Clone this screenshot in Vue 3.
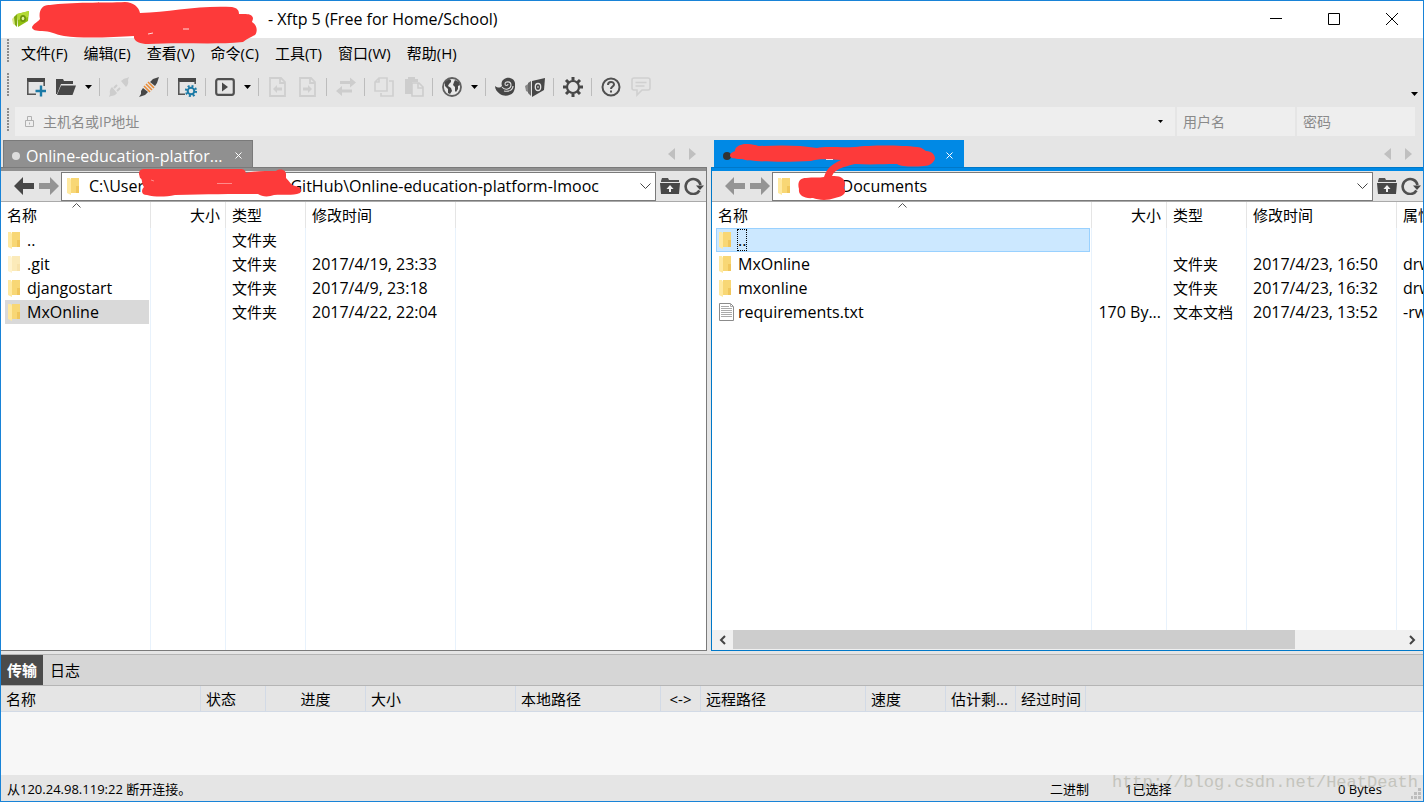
<script setup>
import { ref } from 'vue'

const menus = ['文件(F)', '编辑(E)', '查看(V)', '命令(C)', '工具(T)', '窗口(W)', '帮助(H)']

const tools = [
  { id: 'new', label: '新建' },
  { id: 'open', label: '打开', menu: true },
  { sep: true },
  { id: 'unplug', label: '断开', off: true },
  { id: 'plug', label: '重新连接' },
  { sep: true },
  { id: 'props', label: '属性' },
  { sep: true },
  { id: 'play', label: '运行', menu: true },
  { sep: true },
  { id: 'docleft', label: '下载', off: true },
  { id: 'docright', label: '上传', off: true },
  { sep: true },
  { id: 'swap', label: '同步', off: true },
  { sep: true },
  { id: 'copy', label: '复制', off: true },
  { id: 'paste', label: '粘贴', off: true },
  { sep: true },
  { id: 'globe', label: '编码', menu: true },
  { sep: true },
  { id: 'shell', label: 'Xshell' },
  { id: 'xftp', label: 'Xftp' },
  { sep: true },
  { id: 'gear', label: '选项' },
  { sep: true },
  { id: 'help', label: '帮助' },
  { id: 'chat', label: '反馈', off: true },
]

const gap = (n) => '\u00a0'.repeat(n)

const panes = ref([
  {
    side: 'local',
    tab: 'Online-education-platfor...',
    path: 'C:\\Users\\' + gap(32) + 'GitHub\\Online-education-platform-Imooc',
    cols: ['名称', '大小', '类型', '修改时间', ''],
    rows: [
      { name: '..', icon: 'folder', type: '文件夹' },
      { name: '.git', icon: 'folder', faded: true, type: '文件夹', time: '2017/4/19, 23:33' },
      { name: 'djangostart', icon: 'folder', type: '文件夹', time: '2017/4/9, 23:18' },
      { name: 'MxOnline', icon: 'folder', type: '文件夹', time: '2017/4/22, 22:04', selected: true },
    ],
  },
  {
    side: 'remote',
    tab: '',
    path: gap(10) + 'Documents',
    cols: ['名称', '大小', '类型', '修改时间', '属性'],
    rows: [
      { name: '..', icon: 'folder', selected: true },
      { name: 'MxOnline', icon: 'folder', type: '文件夹', time: '2017/4/23, 16:50', attr: 'drwxr-xr-x' },
      { name: 'mxonline', icon: 'folder', type: '文件夹', time: '2017/4/23, 16:32', attr: 'drwxr-xr-x' },
      { name: 'requirements.txt', icon: 'text', size: '170 By...', type: '文本文档', time: '2017/4/23, 13:52', attr: '-rw-r--r--' },
    ],
  },
])

const transferCols = ['名称', '状态', '进度', '大小', '本地路径', '<->', '远程路径', '速度', '估计剩...', '经过时间', '']
</script>

<template>
  <div class="window">
    <header class="titlebar">
      <svg class="app-icon" viewBox="0 0 20 18" width="20" height="18">
        <path d="M2 9l3-3v9l-2-1z" fill="#dbe88a" />
        <path d="M4 7l3-3v13l-2-2z" fill="#7fa80f" />
        <path d="M7 4l12-3-1 10-10 6z" fill="#8fbf10" />
        <path d="M7 4l12-3-1 6-10 3z" fill="#b4da35" />
        <ellipse cx="13" cy="8.500" rx="3" ry="3.500" fill="#6f960c" />
        <ellipse cx="13" cy="8.500" rx="1.300" ry="1.800" fill="#e4f3a0" />
      </svg>
      <h1>- Xftp 5 (Free for Home/School)</h1>
      <div class="controls">
        <button aria-label="最小化"><svg width="12" height="12"><path d="M0 5.500h12" stroke="#000" /></svg></button>
        <button aria-label="最大化"><svg width="12" height="12"><path d="M.5.5h11v11h-11z" stroke="#000" fill="none" /></svg></button>
        <button aria-label="关闭"><svg width="12" height="12"><path d="M0 0l12 12M12 0L0 12" stroke="#000" /></svg></button>
      </div>
      <svg class="scribble title-scribble" width="230" height="46" viewBox="30 0 230 46">
        <path d="M32 27c2-4 6-5 8-8c-2-9 3-15 10-14c20-3 55-2 75-3c8 0 14 5 15 11c30-1 60-8 92-6c5 1 7 3 7 7c6 0 13-1 14 4c0 2-1 3-1 4c5 3 6 9 3 13c-6 3-8 4-12 7c-30 3-60 0-95 2c-8 0-15-3-14-8c-20 1-50 3-70 0c-10-2-14-5-22-5c-6 0-10-1-10-4z" />
        <path d="M183 29h6M148 34l5-1" stroke="#ffd9d9" />
      </svg>
    </header>

    <div class="band menu-band">
      <span class="grip"></span>
      <nav><button v-for="m in menus" :key="m">{{ m }}</button></nav>
    </div>

    <div class="band tool-band">
      <span class="grip"></span>
      <div class="tools">
        <template v-for="(t, i) in tools" :key="i">
          <span v-if="t.sep" class="sep"></span>
          <template v-else>
            <button class="tool" :disabled="t.off" :aria-label="t.label">
              <svg width="20" height="20" viewBox="0 0 20 20">
                <g v-if="t.id === 'new'">
                  <path d="M1 1h18v4H1z" fill="#474747" /><path d="M1.800 4v13.200H10M18.200 4v5" fill="none" stroke="#555" stroke-width="1.600" />
                  <path d="M15 8.500v11M9.500 14h11" stroke="#1b7aa6" stroke-width="2.400" />
                </g>
                <g v-else-if="t.id === 'open'" fill="#474747">
                  <path d="M0 17V2h7l1 2h9v3H5L1 17z" /><path d="M5 8.500h15L16.500 18H1z" />
                </g>
                <g v-else-if="t.id === 'unplug'" fill="#cdcdcd">
                  <path d="M20 0l-2 1q-3 0-6 3l5 6q3-3 2-7zM0 20l2-1q4 0 6-3l-5-6q-3 3-2 7z" />
                  <path d="M5 11l3-3M8 14l3-3" stroke="#cdcdcd" stroke-width="2" />
                </g>
                <g v-else-if="t.id === 'plug'">
                  <path d="M20 0l-3 1-3 1-3 3 5 4 2-3 1-3zM0 20l3-1 3-1 3-3-5-4-2 3v3z" fill="#474747" />
                  <path d="M9 5l6 6M7 7l6 6M5 9l6 6" stroke="#e98a35" stroke-width="1.600" />
                </g>
                <g v-else-if="t.id === 'props'">
                  <path d="M1 1h18v4H1z" fill="#474747" /><path d="M1.800 4v13.200H8M18.200 4v3" fill="none" stroke="#555" stroke-width="1.600" />
                  <circle cx="14" cy="14" r="3.300" fill="none" stroke="#1b7aa6" stroke-width="2" />
                  <circle cx="14" cy="14" r="5" fill="none" stroke="#1b7aa6" stroke-width="2.200" stroke-dasharray="1.960" />
                </g>
                <g v-else-if="t.id === 'play'">
                  <rect x="1.200" y="2.200" width="17.600" height="15.600" rx="2" fill="none" stroke="#505050" stroke-width="2.200" /><path d="M7 5.500l6 4.500-6 4.500z" fill="#474747" />
                </g>
                <g v-else-if="t.id === 'docleft' || t.id === 'docright'" fill="none" stroke="#cfcfcf" stroke-width="1.800">
                  <path d="M2 1h11l4 4v14H2zM12 1v5h5" />
                  <path v-if="t.id === 'docleft'" d="M5 12l4-4v2.500h5v3H9V16z" fill="#cfcfcf" stroke="none" />
                  <path v-else d="M14 12l-4-4v2.500H5v3h5V16z" fill="#cfcfcf" stroke="none" />
                </g>
                <path v-else-if="t.id === 'swap'" d="M20 5.500L14 .500V4H4v3h10v3.500zM0 14l6 5v-3.500h10v-3H6V9z" fill="#cdcdcd" />
                <g v-else-if="t.id === 'copy'" fill="none" stroke="#cfcfcf" stroke-width="1.600">
                  <path d="M5 1h8v13H1V5zM5 1v4H1M15 4h4v15H7v-3" />
                </g>
                <g v-else-if="t.id === 'paste'">
                  <path d="M1 2h3V0h7v2h3v3H8v12H1z" fill="#cdcdcd" /><path d="M8 6h7l4 4v9H8zM14 6v5h5" fill="#e5e5e5" stroke="#cdcdcd" stroke-width="1.600" />
                </g>
                <g v-else-if="t.id === 'globe'">
                  <circle cx="10" cy="10" r="9" fill="#e8e8e8" stroke="#606060" stroke-width="1.800" />
                  <path d="M3 5l4-3 2 1 0 2-2 2-1 2 3 2 1 3-2 3-2-1 0-4-3-3zM13 3l4 2 1 3-2 1 0 3-2 3-1-1 0-4-2-2 1-3z" fill="#474747" />
                </g>
                <g v-else-if="t.id === 'shell'">
                  <path d="M0 9c3 2 5 2 7 0c-2-5 3-9 8-8c6 1 6 8 4 13c-2 5-10 6-14 3c-3-2-5-5-5-8z" fill="#474747" />
                  <path d="M7 10c3 4 9 2 9-2c0-4-6-4-6-1c0 2 3 2 3 0M9 14c5 1 9-1 9-5" fill="none" stroke="#dedede" stroke-width="1.100" />
                </g>
                <g v-else-if="t.id === 'xftp'">
                  <path d="M0 9l3-2v8l-2-1z" fill="#888" /><path d="M3 6l3-2v15l-3-3z" fill="#6a6a6a" />
                  <path d="M7 4l13-3-1 12-12 7z" fill="#474747" />
                  <ellipse cx="13" cy="10" rx="2.700" ry="3.500" fill="none" stroke="#e5e5e5" stroke-width="1.300" /><path d="M13 9v2" stroke="#e5e5e5" />
                </g>
                <g v-else-if="t.id === 'gear'" fill="none" stroke="#474747">
                  <circle cx="10" cy="10" r="6" stroke-width="2.200" />
                  <path d="M10 0v3.500M10 16.500V20M0 10h3.500M16.500 10H20M3 3l2.500 2.500M14.500 14.500L17 17M17 3l-2.500 2.500M5.500 14.500L3 17" stroke-width="3" />
                </g>
                <g v-else-if="t.id === 'help'" fill="none" stroke="#505050" stroke-width="2">
                  <circle cx="10" cy="10" r="8.500" /><path d="M7 8c0-4 6-4 6-.500c0 2-3 2-3 4.500M10 13.500v2" />
                </g>
                <g v-else fill="none" stroke="#d0d0d0" stroke-width="1.600">
                  <path d="M3 1h14q2 0 2 2v8q0 2-2 2h-6l-5 5v-5H3q-2 0-2-2V3q0-2 2-2zM4.500 5.500h11M4.500 9h9" />
                </g>
              </svg>
            </button>
            <button v-if="t.menu" class="tool-drop" :aria-label="t.label + '菜单'"><svg width="7" height="4"><path d="M0 0h7L3.500 4z" /></svg></button>
          </template>
        </template>
      </div>
      <button class="overflow" aria-label="更多"><svg width="7" height="4"><path d="M0 0h7L3.500 4z" /></svg></button>
    </div>

    <form class="band connect-band" @submit.prevent>
      <span class="grip"></span>
      <label class="field host">
        <svg width="9" height="12" viewBox="0 0 9 12"><path d="M.5 4.500h8v6h-8zM2.500 4.500v-4h4v4M4.500 6.500v2" fill="none" stroke="#b0b0b0" /></svg>
        <input type="text" placeholder="主机名或IP地址" aria-label="主机名或IP地址" />
        <button type="button" aria-label="历史记录"><svg width="5" height="3"><path d="M0 0h5L2.500 3z" /></svg></button>
      </label>
      <label class="field"><input type="text" placeholder="用户名" aria-label="用户名" /></label>
      <label class="field"><input type="password" placeholder="密码" aria-label="密码" /></label>
    </form>

    <main class="panes">
      <section v-for="p in panes" :key="p.side" class="pane" :class="p.side">
        <div class="tabstrip">
          <div class="tab">
            <i class="dot"></i>
            <button class="tab-name" :aria-label="p.tab || p.side">{{ p.tab }}</button>
            <button class="tab-close" aria-label="关闭标签"><svg width="7" height="7"><path d="M.5.5l6 6M6.500.5l-6 6" stroke="#fff" /></svg></button>
          </div>
          <div class="tab-scroll">
            <button aria-label="上一个标签"><svg width="7" height="12"><path d="M7 0v12L0 6z" fill="#c0c0c0" /></svg></button>
            <button aria-label="下一个标签"><svg width="7" height="12"><path d="M0 0v12l7-6z" fill="#c0c0c0" /></svg></button>
          </div>
        </div>
        <div class="frame">
          <div class="navrow">
            <div class="arrows">
              <button class="back" aria-label="后退"><svg width="20" height="18" viewBox="0 0 20 18"><path d="M0 9l9-9v6h11v6H9v6z" fill="currentColor" /></svg></button>
              <button class="forward" aria-label="前进"><svg width="20" height="18" viewBox="0 0 20 18"><path d="M20 9l-9-9v6H0v6h11v6z" fill="currentColor" /></svg></button>
            </div>
            <div class="path">
              <svg class="fileicon" width="12" height="17" viewBox="0 0 12 17"><path d="M4 0h8v15H4z" fill="#f8d775" /><path d="M9 8h3v7H9z" fill="#f0c65c" /><path d="M0 0h3l1 2v15l-4-2z" fill="#ffe9a0" /></svg>
              <input v-model="p.path" type="text" aria-label="路径" />
              <button aria-label="路径列表"><svg width="11" height="6"><path d="M.5.5l5 5 5-5" fill="none" stroke="#444" /></svg></button>
            </div>
            <div class="actions">
              <button aria-label="上级目录">
                <svg width="20" height="16" viewBox="0 0 20 16"><path d="M1 3l1-3h6l1 2h10v2H1z" fill="#505050" /><path d="M0 5h20l-1 11H1z" fill="#474747" /><path d="M10 7l3.500 4h-2.500v3H9v-3H6.500z" fill="#f0f0f0" /></svg>
              </button>
              <button aria-label="刷新">
                <svg width="20" height="18" viewBox="0 0 20 18"><path d="M15.500 13.500A7.500 7.500 0 1 1 16.500 8" fill="none" stroke="#505050" stroke-width="2.600" /><path d="M12 8.500h8L16 13z" fill="#474747" /></svg>
              </button>
            </div>
          </div>
          <div class="listing">
            <table>
              <colgroup><col class="c-name" /><col class="c-size" /><col class="c-type" /><col class="c-time" /><col class="c-attr" /></colgroup>
              <thead>
                <tr>
                  <th v-for="(c, i) in p.cols" :key="i" scope="col">
                    {{ c }}<svg v-if="i === 0" class="sort" width="9" height="5"><path d="M.5 4.500l4-4 4 4" fill="none" stroke="#555" /></svg>
                  </th>
                </tr>
              </thead>
              <tbody>
                <tr v-for="r in p.rows" :key="r.name">
                  <td>
                    <div class="entry" :class="{ selected: r.selected }">
                      <svg v-if="r.icon === 'folder'" class="fileicon" :class="{ faded: r.faded }" width="12" height="17" viewBox="0 0 12 17"><path d="M4 0h8v15H4z" fill="#f8d775" /><path d="M9 8h3v7H9z" fill="#f0c65c" /><path d="M0 0h3l1 2v15l-4-2z" fill="#ffe9a0" /></svg>
                      <svg v-else class="texticon" width="15" height="18" viewBox="0 0 15 18"><path d="M.5.5h11l3 3v14H.5z" fill="#fff" stroke="#8b8b8b" /><path d="M11.500.5v3h3M2 3.500h8M2 5.500h11M2 7.500h11M2 9.500h11M2 11.500h11M2 13.500h11" fill="none" stroke="#aaa" /></svg>
                      <span>{{ r.name }}</span>
                    </div>
                  </td>
                  <td>{{ r.size }}</td>
                  <td class="kind">{{ r.type }}</td>
                  <td>{{ r.time }}</td>
                  <td>{{ r.attr }}</td>
                </tr>
                <tr class="rest"><td v-for="n in 5" :key="n"></td></tr>
              </tbody>
            </table>
          </div>
          <div v-if="p.side === 'remote'" class="hscroll">
            <button aria-label="向左滚动"><svg width="7" height="10"><path d="M6 1L2 5l4 4" fill="none" stroke="#444" stroke-width="2" /></svg></button>
            <div class="track"><div class="thumb"></div></div>
            <button aria-label="向右滚动"><svg width="7" height="10"><path d="M1 1l4 4-4 4" fill="none" stroke="#444" stroke-width="2" /></svg></button>
          </div>
        </div>
        <svg v-if="p.side === 'local'" class="scribble path-scribble" width="166" height="30" viewBox="138 167 166 30">
          <path d="M139 174c0-4 2-5 6-5h95c4 0 5 1 6 4c10-2 20-2 30-2c4-3 10-1 10 3v4c4 4 5 7 9 8c5 1 8 4 5 7c-8 3-17 1-26 2c-5 2-12 2-16-1c-25 0-50 0-83 1c-10 2-20 2-28 0c-6 0-6-5-3-8c-3-4-1-8-4-9z" />
          <path d="M217 183.500h15M151 180l3 1" stroke="#ff8a8a" />
        </svg>
        <svg v-else class="scribble path-scribble" width="208" height="58" viewBox="728 142 208 58">
          <path d="M730 156c0-3 3-4 5-5c0-4 4-6 9-7c12 0 12 2 16 2c20-1 40-1 57 2c8-2 25 0 38-1c15-2 45-2 62 0c5 0 7 3 9 4c6 0 9 4 9 8c-2 4-5 7-11 7c-10 1-22 1-27-2c-14 0-26 1-42 0c-12 3-20 5-23 12c11-1 15 5 12 12c4 6-3 9-9 10c-8 3-17 2-22 0c-9 1-15-3-14-9c-2-7 1-11 7-11c7-1 13 0 18-1c3-9 7-12 17-17c-15-1-25-1-30 1c-17 1-40 1-55 0c-6-1-9 0-14-2c-5 0-11 0-12-3z" />
          <path d="M826 159.500h7" stroke="#ffd9d9" />
        </svg>
      </section>
    </main>

    <section class="transfer">
      <div class="transfer-tabs"><button class="active">传输</button><button>日志</button></div>
      <table>
        <colgroup><col v-for="n in 11" :key="n" :class="'t' + n" /></colgroup>
        <thead><tr><th v-for="(c, i) in transferCols" :key="i" scope="col">{{ c }}</th></tr></thead>
      </table>
      <div class="queue"></div>
    </section>

    <footer>
      <span class="message">从120.24.98.119:22 断开连接。</span>
      <span class="mode">二进制</span>
      <span class="count">1已选择</span>
      <span class="bytes">0 Bytes</span>
      <span class="mark">http://blog.csdn.net/HeatDeath</span>
      <svg class="sizer" width="10" height="11"><path d="M7 0h3v3H7zM3 4h3v3H3zM7 4h3v3H7zM0 8h2v3H0zM3 8h3v3H3zM7 8h3v3H7z" fill="#bdbdbd" /></svg>
    </footer>
  </div>
</template>

<style>
body { background: #e5e5e5; }
</style>

<style scoped>
* { box-sizing: border-box; }
.window {
  display: flex; flex-direction: column; height: 100vh; overflow: hidden;
  border: 1px solid #1883d7; background: #e5e5e5; color: #000;
  font: 15px/20px "Open Sans", "Noto Sans CJK SC", sans-serif;
}
button { display: flex; align-items: center; justify-content: center; padding: 0; border: 0; background: none; color: inherit; font: inherit; }
input { min-width: 0; padding: 0; border: 0; outline: 0; background: none; color: inherit; font: inherit; }
svg { display: block; flex: none; }
.scribble { position: absolute; pointer-events: none; fill: #fd3a3a; z-index: 2; }

.titlebar { position: relative; display: flex; align-items: center; flex: none; height: 37px; padding: 0 2px 2px 9px; background: #fff; }
.title-scribble { left: 29px; top: -1px; }
h1 { flex: 1; margin: 0 0 0 238px; font-size: 16px; font-weight: 400; }
.controls { display: flex; align-self: stretch; }
.controls button { width: 58px; }

.band { display: flex; flex: none; padding-left: 6px; }
.grip { flex: none; width: 2px; height: 24px; background: repeating-linear-gradient(#8c8c8c 0 2px, transparent 2px 3px); }
.menu-band { height: 32px; padding-top: 1px; align-items: flex-start; }
nav { display: flex; gap: 16px; padding: 4px 0 0 12px; }
.tool-band { height: 37px; padding-top: 3px; }
.tools { display: flex; align-items: center; height: 28px; padding-left: 12px; }
.tool { width: 30px; height: 24px; }
.tool-drop { width: 15px; height: 24px; }
.sep { width: 1px; height: 18px; margin-left: 3px; margin-right: 4px; background: #bcbcbc; }
.overflow { align-self: flex-end; width: 9px; height: 26px; margin: 0 4px 0 auto; }
.connect-band { height: 30px; padding-right: 8px; gap: 2px; }
.connect-band .grip { margin-right: 4px; margin-top: 1px; }
.field { display: flex; align-items: center; flex: none; width: 118px; height: 29px; padding: 0 6px; background: #eee; font-size: 14px; }
.field input { width: 100%; }
.field input::placeholder { color: #8a8a8a; opacity: 1; }
.host { flex: 1; padding: 0 12px 0 10px; gap: 9px; }

.panes { display: grid; grid-template-columns: minmax(0, 706fr) minmax(0, 712fr); gap: 4px; flex: 1; min-height: 0; padding-top: 2px; }
.pane { position: relative; display: flex; flex-direction: column; min-height: 0; --edge: #7a7a7a; --tint: #909090; }
.remote { --edge: #0078c8; --tint: #0089e5; }
.tabstrip { display: flex; justify-content: space-between; align-items: flex-end; flex: none; height: 28px; padding: 0 11px 0 2px; }
.remote .tabstrip { padding-left: 3px; }
.tab { display: flex; align-items: center; width: 250px; height: 27px; padding: 3px 10px 0 8px; border: 1px solid var(--edge); border-bottom: 0; background: var(--tint); color: #fff; font-size: 16px; }
.remote .tab { border-color: var(--tint); }
.dot { flex: none; width: 8px; height: 8px; margin-right: 6px; border-radius: 50%; background: #ddd; }
.remote .dot { background: #333; }
.tab-name { flex: 1; justify-content: flex-start; white-space: nowrap; }
.tab-scroll { display: flex; gap: 14px; padding-bottom: 7px; }
.frame { display: flex; flex-direction: column; flex: 1; min-height: 0; border: 1px solid var(--edge); border-left: 0; background: #fff; }
.remote .frame { border-left: 1px solid var(--edge); border-right: 0; }
.navrow { display: flex; align-items: center; flex: none; height: 34px; gap: 2px; padding: 1px 2px 1px 13px; border-top: 3px solid var(--tint); border-bottom: 1px solid #aaa; background: #e5e5e5; }
.remote .navrow { padding-left: 13px; }
.arrows { display: flex; gap: 5px; }
.actions { display: flex; gap: 4px; padding-left: 2px; }
.back { color: #474747; }
.forward, .remote .back { color: #949494; }
.path { display: flex; align-items: center; flex: 1; min-width: 0; height: 29px; padding: 0 4px 0 5px; border: 1px solid #7a7a7a; background: #fff; font-size: 16px; }
.path input { flex: 1; margin-left: 10px; }
.path-scribble { left: 137px; top: 28px; }
.remote .path-scribble { left: 17px; top: 3px; }

.listing { flex: 1; min-height: 0; overflow: hidden; }
table { width: 100%; border-collapse: separate; border-spacing: 0; table-layout: fixed; }
.listing table { height: 100%; }
.c-name { width: 150px; }
.c-size { width: 75px; }
.c-type { width: 80px; }
.c-time { width: 150px; }
.remote table { width: 850px; }
.remote .c-name { width: 380px; }
th, td { padding: 0 6px; border-right: 1px solid #e8f2fc; font-weight: 400; text-align: left; white-space: nowrap; overflow: hidden; }
th { position: relative; height: 26px; border-color: #e5e5e5; }
td { height: 24px; font-size: 16px; }
.kind { font-size: 15px; }
.listing th:nth-child(2), .listing td:nth-child(2) { text-align: right; padding-right: 5px; }
.listing th:last-child, .listing td:last-child { border-right: 0; }
td:first-child { padding: 0 1px 0 4px; }
.rest td { height: auto; }
.sort { position: absolute; left: calc(50% - 4px); top: 1px; }
.entry { display: flex; align-items: center; height: 24px; padding-left: 3px; }
.fileicon { margin-right: 7px; }
.path .fileicon { margin-right: 0; }
.texticon { margin-right: 4px; }
.faded { opacity: .5; }
.local .selected { background: #d9d9d9; }
.remote .selected { padding-left: 2px; border: 1px solid #99d1ff; background: #cce8ff; }
.remote .selected span { outline: 1px dotted #000; }

.hscroll { display: flex; flex: none; height: 20px; background: #f0f0f0; }
.hscroll button { width: 21px; }
.track { flex: 1; }
.thumb { width: 84%; height: 19px; background: #cdcdcd; }

.transfer { display: flex; flex-direction: column; flex: none; margin-top: 3px; border-top: 1px solid #b5b5b5; }
.transfer-tabs { display: flex; height: 31px; border-bottom: 1px solid #b5b5b5; background: #d6d6d6; }
.transfer-tabs button { padding: 0 7px; }
.transfer-tabs .active { padding: 0 6px; background: #4b4b4b; color: #fff; font-weight: 700; }
.transfer th { padding: 0 5px; border-right: 1px solid #d2dae6; border-bottom: 1px solid #d2dae6; }
.transfer th:nth-child(3), .transfer th:nth-child(6) { text-align: center; }
.transfer th:last-child { border-right: 0; }
.t1 { width: 200px; }
.t2 { width: 65px; }
.t3 { width: 100px; }
.t4 { width: 150px; }
.t5 { width: 145px; }
.t6 { width: 40px; }
.t7 { width: 165px; }
.t8 { width: 80px; }
.t9, .t10 { width: 70px; }
.queue { height: 63px; background: #f7f7f7; }

footer { position: relative; display: flex; align-items: center; flex: none; height: 26px; padding: 2px 6px 0; font-size: 13px; }
.message { flex: 1; }
.mode { width: 75px; }
.count { width: 213px; }
.bytes { width: 79px; }
.mark { position: absolute; right: 5px; bottom: 8px; color: #a5a596; opacity: .5; font: 17px/20px "Liberation Mono", monospace; }
.sizer { position: absolute; right: 2px; bottom: 2px; }
</style>
